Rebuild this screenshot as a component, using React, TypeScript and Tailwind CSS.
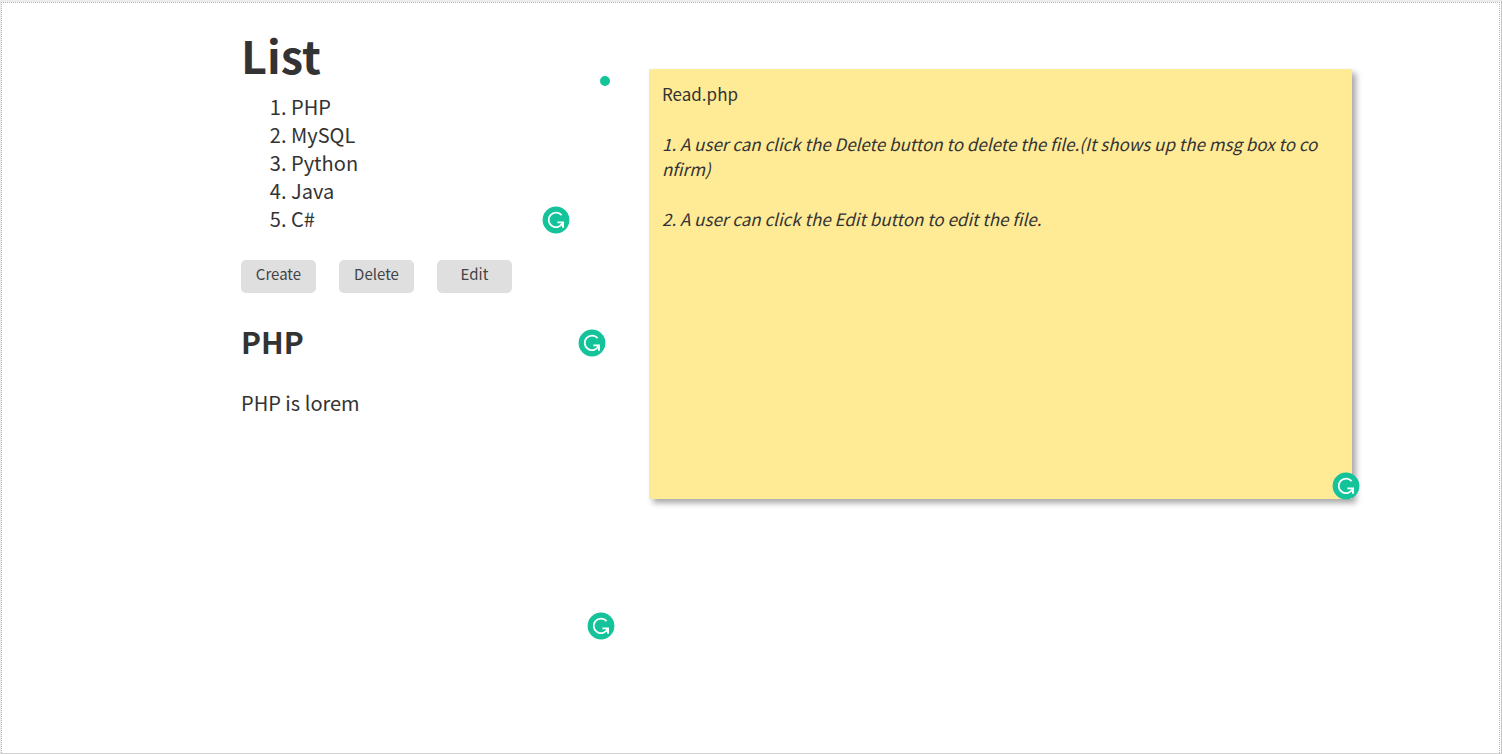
import type { ReactNode } from "react";

const languages = ["PHP", "MySQL", "Python", "Java", "C#"];

function Badge({ place }: { place: string }) {
  return (
    <svg className={`absolute size-7 ${place}`} viewBox="0 0 28 28" aria-hidden="true">
      <circle cx="14" cy="14" r="13.4" fill="#15c39a" />
      <path
        d="M19.6 9.2A7.3 7.3 0 1 0 20.4 17.4"
        fill="none"
        stroke="#fff"
        strokeWidth="1.8"
      />
      <path d="M15.4 15.6h6.4v6.2h-1.7v-4.5h-4.7z" fill="#fff" />
      <path d="M21.8 15.6v6.2l-3.2-3.6z" fill="#fff" />
    </svg>
  );
}

function ActionButton({ children }: { children: ReactNode }) {
  return (
    <button
      type="button"
      className="h-[33px] w-[75px] rounded-[5px] bg-[#dfdfdf] pb-1.5 text-[15px] leading-5 text-[#444]"
    >
      {children}
    </button>
  );
}

export default function App() {
  return (
    <div className="flex min-h-screen flex-col border border-t-2 border-r-[#c4c4c4] border-b-[#d0d0d0] border-l-[#ececec] border-t-[#ececec] bg-white font-['Noto_Sans_CJK_SC',sans-serif] text-[#333]">
      <main className="mr-px grid grow grid-cols-[408px_minmax(0,1fr)] items-start border border-b-0 border-dotted border-[#b4b4b4] pr-[147px] pl-[239px]">
        <div>
          <header className="relative pt-5 pb-1">
            <h1 className="text-[45px] leading-[64px] font-bold">List</h1>
            <span className="absolute top-[73px] left-[359px] size-[10px] rounded-full bg-[#15c39a]" />
          </header>
          <section className="relative pt-0.5">
            <ol className="list-decimal pl-[50px] text-[20px] leading-7">
              {languages.map((name) => (
                <li key={name}>{name}</li>
              ))}
            </ol>
            <Badge place="right-[79px] -bottom-px" />
          </section>
          <div className="mt-[27px] flex gap-[23px]">
            <ActionButton>Create</ActionButton>
            <ActionButton>Delete</ActionButton>
            <ActionButton>Edit</ActionButton>
          </div>
          <section className="relative mt-7">
            <h2 className="text-[30px] leading-10 font-bold">PHP</h2>
            <Badge place="top-2 right-[43px]" />
          </section>
          <section className="relative mt-7 h-[251px]">
            <p className="text-[20px] leading-7">PHP is lorem</p>
            <Badge place="right-[34px] bottom-0" />
          </section>
        </div>
        <article className="relative mt-[66px] min-h-[430px] bg-[#ffea96] py-3 pr-7 pl-[13px] text-[17px] leading-[25px] break-all shadow-[4px_4px_6px_rgba(0,0,0,0.35)]">
          <p>Read.php</p>
          <p className="mt-[25px] italic">
            1. A user can click the Delete button to delete the file.(It shows up the msg box to confirm)
          </p>
          <p className="mt-[25px] italic">2. A user can click the Edit button to edit the file.</p>
          <Badge place="-right-2 -bottom-px" />
        </article>
      </main>
    </div>
  );
}
